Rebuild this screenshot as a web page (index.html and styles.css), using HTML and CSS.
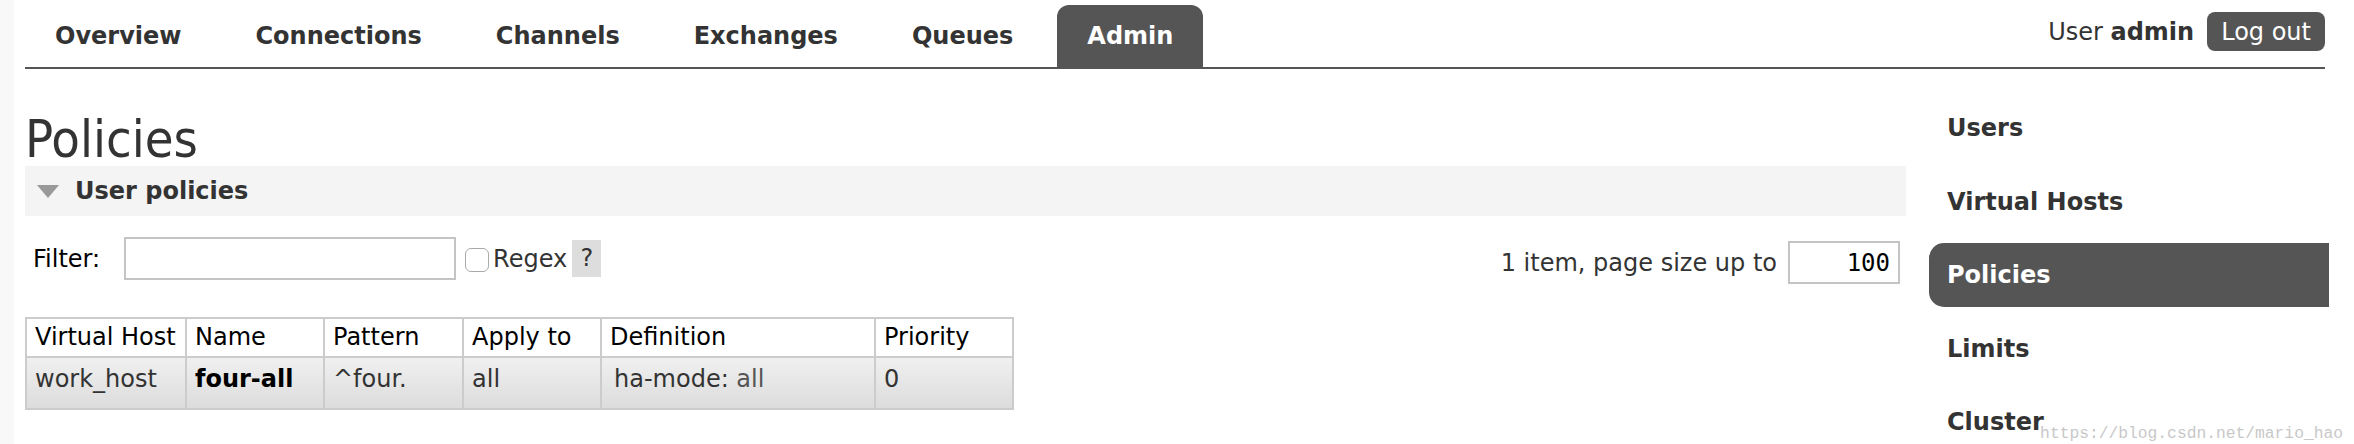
FILE: index.html
```html
<!DOCTYPE html>
<html lang="en">

<head>
    <meta charset="utf-8">
    <title>RabbitMQ Management</title>
    <link rel="stylesheet" href="styles.css">
</head>

<body>
    <div class="header">
        <ul class="tabs">
            <li><a>Overview</a></li>
            <li><a>Connections</a></li>
            <li><a>Channels</a></li>
            <li><a>Exchanges</a></li>
            <li><a>Queues</a></li>
            <li class="active"><a>Admin</a></li>
        </ul>
        <div class="login">
            <span>User <b>admin</b></span>
            <button class="logout">Log out</button>
        </div>
    </div>

    <div class="page">
        <div class="main">
            <h1>Policies</h1>
            <div class="section">
                <h2><span class="arrow"></span>User policies</h2>

                <div class="filter-row">
                    <div class="filter">
                        <label>Filter:</label>
                        <input type="text" class="filter-text">
                        <input type="checkbox" class="regex">
                        <span class="regex-label">Regex</span>
                        <span class="help">?</span>
                    </div>
                    <div class="paging">
                        1 item, page size up to
                        <input type="text" class="page-size" value="100">
                    </div>
                </div>

                <table class="list">
                    <colgroup>
                        <col class="c-vhost">
                        <col class="c-name">
                        <col class="c-pattern">
                        <col class="c-apply">
                        <col class="c-def">
                        <col class="c-prio">
                    </colgroup>
                    <thead>
                        <tr>
                            <th>Virtual Host</th>
                            <th>Name</th>
                            <th>Pattern</th>
                            <th>Apply to</th>
                            <th>Definition</th>
                            <th>Priority</th>
                        </tr>
                    </thead>
                    <tbody>
                        <tr>
                            <td>work_host</td>
                            <td><b>four-all</b></td>
                            <td>^four.</td>
                            <td>all</td>
                            <td class="def">ha-mode: <span class="def-val">all</span></td>
                            <td>0</td>
                        </tr>
                    </tbody>
                </table>
            </div>
        </div>

        <ul class="sidebar">
            <li><a>Users</a></li>
            <li><a>Virtual Hosts</a></li>
            <li class="active"><a>Policies</a></li>
            <li><a>Limits</a></li>
            <li><a>Cluster</a></li>
        </ul>
    </div>

    <div class="watermark">https://blog.csdn.net/mario_hao</div>
</body>

</html>
```

FILE: styles.css
```css
html {
    font-family: "DejaVu Sans", Verdana, sans-serif;
    font-size: 24px;
    color: #333;
}

body {
    margin: 0px;
    overflow: hidden;
    background: linear-gradient(to right, #f8f8f8 0px, #f8f8f8 14px, #fff 14px);
}

.header {
    display: flex;
    justify-content: space-between;
    margin: 0px 29px 0px 25px;
    padding-top: 5px;
    border-bottom: 2px solid #555;
}

.tabs {
    display: flex;
    gap: 14px;
    list-style: none;
    margin: 0px;
    padding: 0px;
}

.tabs a {
    display: block;
    padding: 17px 30px;
    line-height: 28px;
    font-weight: bold;
    color: #333;
}

.tabs .active a {
    background-color: #555;
    color: #fff;
    border-radius: 12px 12px 0px 0px;
}

.login {
    display: flex;
    align-items: center;
    gap: 13px;
    align-self: flex-start;
    margin-top: 7px;
}

.logout {
    font-family: inherit;
    font-size: 24px;
    height: 39px;
    padding: 0px 14px;
    border: none;
    border-radius: 8px;
    background-color: #555;
    color: #fff;
}

.page {
    display: flex;
    gap: 23px;
    padding: 0px 25px;
}

.main {
    flex: 1;
}

h1 {
    font-family: "DejaVu Sans Condensed", "DejaVu Sans", sans-serif;
    font-stretch: condensed;
    font-size: 52px;
    font-weight: normal;
    line-height: 54px;
    margin: 43px 0px 0px;
    color: #333;
}

.section h2 {
    display: flex;
    align-items: center;
    gap: 16px;
    height: 50px;
    margin: 0px;
    padding-left: 12px;
    font-size: 24px;
    background-color: #f4f4f4;
}

.arrow {
    width: 0px;
    height: 0px;
    border-left: 11.5px solid transparent;
    border-right: 11.5px solid transparent;
    border-top: 13px solid #999;
}

.filter-row {
    display: flex;
    justify-content: space-between;
    align-items: flex-start;
    margin-top: 21px;
}

.filter {
    display: flex;
    align-items: center;
    padding-left: 8px;
}

.filter label {
    color: #000;
    margin-right: 24px;
}

.filter-text {
    box-sizing: border-box;
    width: 332px;
    height: 43px;
    margin: 0px;
    border: 2px solid #c4c4c4;
}

.regex {
    appearance: none;
    box-sizing: border-box;
    width: 24px;
    height: 24px;
    margin: 2px 4px 0px 9px;
    border: 1.5px solid #aaa;
    border-radius: 6px;
    background-color: #fff;
}

.help {
    margin-left: 5px;
    width: 29px;
    height: 37px;
    line-height: 37px;
    text-align: center;
    background-color: #ddd;
}

.paging {
    display: flex;
    align-items: center;
    padding-top: 4px;
    margin-right: 6px;
}

.page-size {
    box-sizing: border-box;
    width: 112px;
    height: 43px;
    margin-left: 11px;
    padding-right: 8px;
    border: 2px solid #c4c4c4;
    text-align: right;
    font-family: "DejaVu Sans Mono", monospace;
    font-size: 24px;
    color: #000;
}

.list {
    margin-top: 33px;
    border-collapse: collapse;
    table-layout: fixed;
    width: 987px;
    border: 2px solid #ccc;
}

.c-vhost { width: 160px; }
.c-name { width: 138px; }
.c-pattern { width: 139px; }
.c-apply { width: 138px; }
.c-def { width: 274px; }
.c-prio { width: 138px; }

.list th,
.list td {
    border: 2px solid #ccc;
    text-align: left;
    line-height: 28px;
    white-space: nowrap;
}

.list th {
    font-weight: normal;
    color: #000;
    padding: 4px 8px 5px;
}

.list td {
    padding: 7px 8px 15px;
    color: #333;
    vertical-align: top;
    background: linear-gradient(#f0f0f0, #dcdcdc);
}

.list td b {
    color: #000;
}

.list .def {
    padding-left: 12px;
}

.def-val {
    color: #555;
}

.sidebar {
    display: flex;
    flex-direction: column;
    gap: 9.5px;
    width: 400px;
    list-style: none;
    margin: 27px 0px 0px;
    padding: 0px;
}

.sidebar a {
    display: block;
    height: 64px;
    line-height: 64px;
    padding-left: 18px;
    font-weight: bold;
    color: #333;
}

.sidebar .active a {
    background-color: #555;
    color: #fff;
    border-radius: 15px 0px 0px 15px;
}

/* blog watermark printed over the bottom right corner */
.watermark {
    position: absolute;
    top: 424px;
    right: 11px;
    font-family: "Liberation Mono", monospace;
    font-size: 16.3px;
    color: #c8c8c8;
}
```
